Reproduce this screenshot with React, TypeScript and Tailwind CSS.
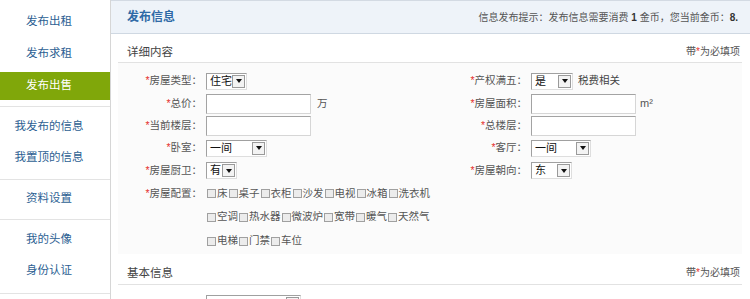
import React from "react";

function Req({ children }: { children: React.ReactNode }) {
  return (
    <span>
      <span className="text-[#e5322d]">*</span>
      {children}
    </span>
  );
}

function Sel({ text, className }: { text: string; className: string }) {
  return (
    <div
      className={
        "inline-flex shrink-0 items-center h-[17px] bg-white border border-[#a0a0a0] border-r-[#dedede] border-b-[#dedede] " +
        className
      }
    >
      <span className="flex-1 pl-[3px] text-[11px] leading-none text-[#111]">{text}</span>
      <span className="w-[13px] h-[13px] mr-[1px] border border-[#9a9a9a] bg-[#f3f3f3] flex items-center justify-center">
        <span className="w-0 h-0 border-l-[3px] border-r-[3px] border-t-[4px] border-l-transparent border-r-transparent border-t-[#111]" />
      </span>
    </div>
  );
}

function Inp() {
  return (
    <div className="w-[105px] h-[20px] shrink-0 bg-white border border-[#d6d6d6] border-t-[#a3a3a3] border-l-[#a3a3a3]" />
  );
}

function Cb({ label }: { label: string }) {
  return (
    <span className="inline-flex items-center">
      <span className="inline-block w-[9px] h-[9px] ml-[1px] mr-[1px] border border-[#a0a0a0] bg-[#ececec]" />
      <span>{label}</span>
    </span>
  );
}

function Cell({
  label,
  children,
  right,
}: {
  label?: string;
  children?: React.ReactNode;
  right?: boolean;
}) {
  return (
    <div className={(right ? "flex-1 min-w-0" : "w-[325px] shrink-0") + " flex items-center whitespace-nowrap"}>
      <div className="w-[86px] shrink-0 text-right pr-[2px] mr-[2px]">{label ? <Req>{label}</Req> : null}</div>
      <div className="flex items-center shrink-0">{children}</div>
    </div>
  );
}

const groups = [
  { items: ["发布出租", "发布求租", "发布出售"], cls: "pt-[8px] pb-[6px] gap-[4px]" },
  { items: ["我发布的信息", "我置顶的信息"], cls: "pt-[6px] pb-[7px] gap-[3px]" },
  { items: ["资料设置"], cls: "pt-[5px] pb-[6px]" },
  { items: ["我的头像", "身份认证"], cls: "pt-[6px] pb-[8px] gap-[3px]" },
];

export default function App() {
  return (
    <div className="w-[750px] h-[299px] overflow-hidden bg-white flex font-['Liberation_Sans','Noto_Sans_CJK_SC',sans-serif]">
      {/* Sidebar */}
      <div className="w-[111px] shrink-0 border-r border-[#d6d6d6] flex flex-col">
        {groups.map((g, gi) => (
          <div key={gi} className={"flex flex-col border-b border-[#e3e3e3] " + g.cls}>
            {g.items.map((it) => {
              const active = it === "发布出售";
              return (
                <div
                  key={it}
                  className={
                    "h-[28px] flex items-center justify-center pr-[12px] text-[11.5px] " +
                    (active ? "bg-[#80a70a] text-white" : "text-[#2d5f93]")
                  }
                >
                  {it}
                </div>
              );
            })}
          </div>
        ))}
      </div>

      {/* Main */}
      <div className="flex-1 min-w-0 flex flex-col border-t border-[#d3dae3]">
        <div className="h-[33px] shrink-0 bg-[#eef3f9] border-b border-[#cfd8e2] flex items-center justify-between pl-[16px] pr-[12px]">
          <span className="text-[12px] font-bold text-[#2f6aa6]">发布信息</span>
          <span className="text-[10px] text-[#555] whitespace-nowrap">
            信息发布提示：发布信息需要消费 <b className="text-[#333]">1</b> 金币，您当前金币：
            <b className="text-[#333]">8.</b>
          </span>
        </div>

        <div className="ml-[7px] mr-[8px] flex flex-col">
          {/* Section header */}
          <div className="h-[29px] shrink-0 pt-[11px] leading-[14px] flex justify-between border-b border-[#e2e2e2] pl-[9px] pr-[2px]">
            <span className="text-[11.5px] text-[#444]">详细内容</span>
            <span className="text-[10px] text-[#555]">
              带<span className="text-[#e5322d]">*</span>为必填项
            </span>
          </div>

          {/* Form */}
          <div className="bg-[#fbfbfb] pt-[7px] text-[10.5px] text-[#555] h-[191px]">
            <div className="h-[22px] flex items-center">
              <Cell label="房屋类型：">
                <Sel text="住宅" className="w-[41px]" />
              </Cell>
              <Cell right label="产权满五：">
                <Sel text="是" className="w-[42px]" />
                <span className="ml-[5px] text-[#444]">税费相关</span>
              </Cell>
            </div>
            <div className="h-[23px] flex items-center">
              <Cell label="总价：">
                <Inp />
                <span className="ml-[6px]">万</span>
              </Cell>
              <Cell right label="房屋面积：">
                <Inp />
                <span className="ml-[4px] text-[11px]">m²</span>
              </Cell>
            </div>
            <div className="h-[22px] flex items-center">
              <Cell label="当前楼层：">
                <Inp />
              </Cell>
              <Cell right label="总楼层：">
                <Inp />
              </Cell>
            </div>
            <div className="h-[22px] flex items-center">
              <Cell label="卧室：">
                <Sel text="一间" className="w-[61px]" />
              </Cell>
              <Cell right label="客厅：">
                <Sel text="一间" className="w-[60px]" />
              </Cell>
            </div>
            <div className="h-[23px] flex items-center">
              <Cell label="房屋厨卫：">
                <Sel text="有" className="w-[31px]" />
              </Cell>
              <Cell right label="房屋朝向：">
                <Sel text="东" className="w-[41px]" />
              </Cell>
            </div>
            <div className="h-[23px] flex items-center">
              <Cell label="房屋配置：">
                {["床", "桌子", "衣柜", "沙发", "电视", "冰箱", "洗衣机"].map((t) => (
                  <Cb key={t} label={t} />
                ))}
              </Cell>
            </div>
            <div className="h-[24px] flex items-center">
              <Cell>
                {["空调", "热水器", "微波炉", "宽带", "暖气", "天然气"].map((t) => (
                  <Cb key={t} label={t} />
                ))}
              </Cell>
            </div>
            <div className="h-[24px] flex items-center">
              <Cell>
                {["电梯", "门禁", "车位"].map((t) => (
                  <Cb key={t} label={t} />
                ))}
              </Cell>
            </div>
          </div>

          {/* Section 2 */}
          <div className="h-[31px] shrink-0 pt-[12px] leading-[14px] flex justify-between border-b border-[#e2e2e2] pl-[9px] pr-[2px]">
            <span className="text-[11.5px] text-[#444]">基本信息</span>
            <span className="text-[10px] text-[#555]">
              带<span className="text-[#e5322d]">*</span>为必填项
            </span>
          </div>
          <div className="pt-[10px] text-[10.5px] text-[#555] flex">
            <Cell>
              <Sel text="" className="w-[95px]" />
            </Cell>
          </div>
        </div>
      </div>
    </div>
  );
}
